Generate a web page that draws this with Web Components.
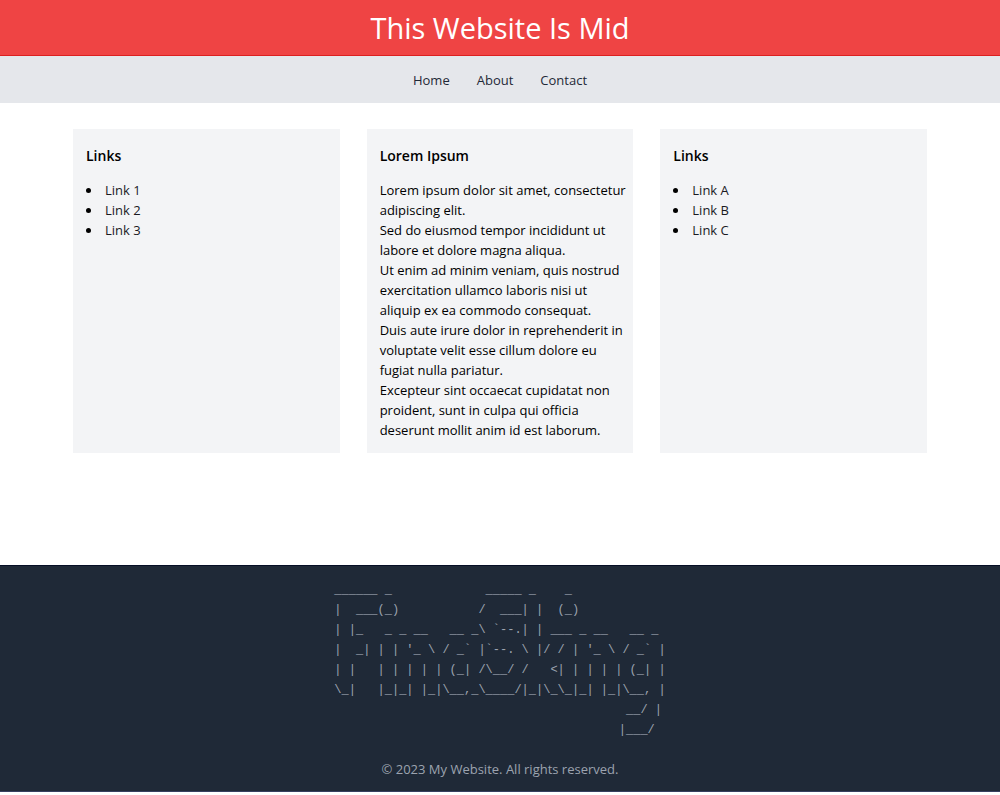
<!DOCTYPE html>
<html lang="en">
<head>
<meta charset="utf-8">
<meta name="viewport" content="width=device-width, initial-scale=1">
<title>This Website Is Mid</title>
<style>
  body { margin: 0; background: #fff; color: #000; font: 13px/20px "Open Sans", "Noto Sans", sans-serif; }
</style>
</head>
<body>
<mid-page>
  <site-header slot="header">This Website Is Mid</site-header>
  <site-nav slot="nav">
    <nav-link href="#home">Home</nav-link>
    <nav-link href="#about">About</nav-link>
    <nav-link href="#contact">Contact</nav-link>
  </site-nav>
  <content-card>
    <span slot="title">Links</span>
    <link-list items="Link 1,Link 2,Link 3"></link-list>
  </content-card>
  <content-card>
    <span slot="title">Lorem Ipsum</span>
    <div>Lorem ipsum dolor sit amet, consectetur adipiscing elit.</div>
    <div>Sed do eiusmod tempor incididunt ut labore et dolore magna aliqua.</div>
    <div>Ut enim ad minim veniam, quis nostrud exercitation ullamco laboris nisi ut aliquip ex ea commodo consequat.</div>
    <div>Duis aute irure dolor in reprehenderit in voluptate velit esse cillum dolore eu fugiat nulla pariatur.</div>
    <div>Excepteur sint occaecat cupidatat non proident, sunt in culpa qui officia deserunt mollit anim id est laborum.</div>
  </content-card>
  <content-card>
    <span slot="title">Links</span>
    <link-list items="Link A,Link B,Link C"></link-list>
  </content-card>
  <site-footer slot="footer">© 2023 My Website. All rights reserved.</site-footer>
</mid-page>

<script>
const define = (name, html, setup) => customElements.define(name, class extends HTMLElement {
  constructor() {
    super();
    this.attachShadow({ mode: "open" }).innerHTML = html;
  }
  connectedCallback() { if (setup) setup(this, this.shadowRoot); }
});

define("mid-page", `
  <style>
    :host { display: flex; flex-direction: column; min-height: calc(100vh - 3px); }
    main { flex: 1; width: 88%; max-width: 854px; margin: 0 auto; padding: 26px 0; box-sizing: border-box; }
    .grid { display: grid; grid-template-columns: repeat(3, 1fr); gap: 27px; }
  </style>
  <slot name="header"></slot>
  <slot name="nav"></slot>
  <main><div class="grid"><slot></slot></div></main>
  <slot name="footer"></slot>
`);

define("site-header", `
  <style>
    :host { display: block; background: #ef4444; border-bottom: 1px solid #dc2020; color: #fff; text-align: center; }
    h1 { margin: 0; padding: 10px 0; font-size: 29px; line-height: 35px; font-weight: 400; }
  </style>
  <header><h1><slot></slot></h1></header>
`);

define("site-nav", `
  <style>
    :host { display: block; background: #e5e7eb; }
    nav { display: flex; justify-content: center; gap: 27px; padding: 14px 0 13px; }
  </style>
  <nav><slot></slot></nav>
`);

define("nav-link", `
  <style>
    :host { display: block; }
    a { color: #1f2937; text-decoration: none; }
  </style>
  <a><slot></slot></a>
`, (host, root) => { root.querySelector("a").href = host.getAttribute("href"); });

define("content-card", `
  <style>
    :host { display: block; background: #f3f4f6; padding: 13px 4px 13px 13px; }
    h2 { margin: 0 0 11px; font-size: 14px; line-height: 27px; font-weight: 600; }
  </style>
  <h2><slot name="title"></slot></h2>
  <slot></slot>
`);

define("link-list", `
  <style>
    :host { display: block; }
    ul { margin: 0; padding: 0; list-style: disc inside; }
    a { color: #1a1a1f; text-decoration: none; }
  </style>
  <ul></ul>
`, (host, root) => {
  const list = root.querySelector("ul");
  list.replaceChildren(...host.getAttribute("items").split(",").map(text => {
    const item = document.createElement("li");
    const link = document.createElement("a");
    link.href = "#";
    link.textContent = text;
    item.append(link);
    return item;
  }));
});

// Every row keeps its own padded length, since the rows are centred one by one.
const banner = [
  String.raw`______ _             _____ _    _`.padEnd(46),
  String.raw`|  ___(_)           /  ___| |  (_)`.padEnd(46),
  String.raw`| |_   _ _ __   __ _\ ` + "`--.| | ___ _ __   __ _ ",
  String.raw`|  _| | | '_ \ / _` + "` |`--. " + String.raw`\ |/ / | '_ \ / _` + "` |",
  String.raw`| |   | | | | | (_| /\__/ /   <| | | | | (_| |`,
  String.raw`\_|   |_|_| |_|\__,_\____/|_|\_\_|_| |_|\__, |`,
  "__/ |".padStart(45),
  "|___/ ".padStart(45)
].join("\n");

define("site-footer", `
  <style>
    :host { display: block; background: #1f2937; border-top: 1px solid #060f26; border-bottom: 1px solid #374060; color: #9ca3af; text-align: center; }
    footer { padding: 14px 13px 12px; }
    pre { margin: 0 0 19px; font: 12px/20px "Liberation Mono", monospace; white-space: pre; }
    p { margin: 0; }
  </style>
  <footer>
    <pre></pre>
    <p><slot></slot></p>
  </footer>
`, (host, root) => { root.querySelector("pre").textContent = banner; });
</script>
</body>
</html>
